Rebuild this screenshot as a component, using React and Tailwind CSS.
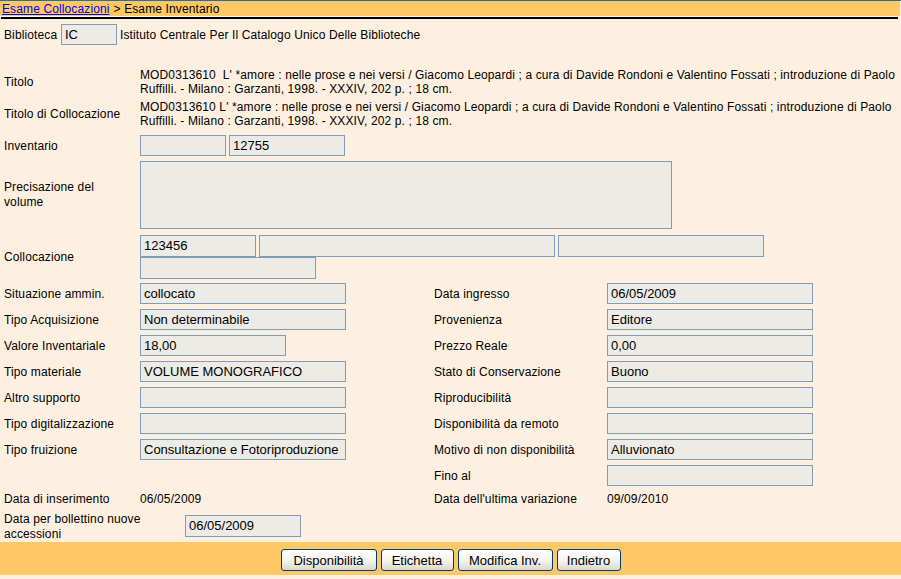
import React from 'react';

// --- Campi della scheda inventario (colonna sinistra / destra) ---
const rows = [
  { left: { label: 'Situazione ammin.', value: 'collocato' }, right: { label: 'Data ingresso', value: '06/05/2009' } },
  { left: { label: 'Tipo Acquisizione', value: 'Non determinabile' }, right: { label: 'Provenienza', value: 'Editore' } },
  { left: { label: 'Valore Inventariale', value: '18,00', short: true }, right: { label: 'Prezzo Reale', value: '0,00' } },
  { left: { label: 'Tipo materiale', value: 'VOLUME MONOGRAFICO' }, right: { label: 'Stato di Conservazione', value: 'Buono' } },
  { left: { label: 'Altro supporto', value: '' }, right: { label: 'Riproducibilità', value: '' } },
  { left: { label: 'Tipo digitalizzazione', value: '' }, right: { label: 'Disponibilità da remoto', value: '' } },
  { left: { label: 'Tipo fruizione', value: 'Consultazione e Fotoriproduzione' }, right: { label: 'Motivo di non disponibilità', value: 'Alluvionato' } },
  { left: null, right: { label: 'Fino al', value: '' } },
];

const buttons = [
  { name: 'Disponibilità', w: 'w-[96px]' },
  { name: 'Etichetta', w: 'w-[73px]' },
  { name: 'Modifica Inv.', w: 'w-[95px]' },
  { name: 'Indietro', w: 'w-[64px]' },
];

// campo "readonly" stile form classico
const Field = ({ value = '', className = '' }) => (
  <div className={`h-[21px] bg-[#ecebe5] border border-[#7f9db9] pl-[3px] flex items-center text-[13px] tracking-normal whitespace-nowrap overflow-hidden ${className}`}>
    {value}
  </div>
);

const App = () => {
  return (
    <div className="w-[901px] h-[579px] bg-[#fdf0e1] text-black text-[12px] tracking-[0.12px] overflow-hidden font-['Liberation_Sans',Arial,sans-serif]">
      {/* Barra di navigazione */}
      <div className="h-[1px] bg-[#2d6ca8]" />
      <div className="h-[15px] bg-[#fec865] flex items-center pl-[2px] mr-[1px] leading-none">
        <a href="#" className="text-[#0000ee] underline">Esame Collocazioni</a>
        <span className="ml-[4px]">&gt; Esame Inventario</span>
      </div>
      <div className="h-[1px] bg-[#fff7ea]" />
      <div className="h-[2px] bg-black ml-[1px] mr-[3px]" />

      <div className="pl-[4px]">
        {/* Biblioteca */}
        <div className="mt-[5px] flex items-center h-[21px]">
          <span className="w-[57px]">Biblioteca</span>
          <Field value="IC" className="w-[56px]" />
          <span className="ml-[3px]">Istituto Centrale Per Il Catalogo Unico Delle Biblioteche</span>
        </div>

        {/* Titoli */}
        <div className="mt-[23px] grid grid-cols-[136px_1fr] items-center">
          <span>Titolo</span>
          <div className="leading-[14px] whitespace-nowrap">
            MOD0313610&nbsp; L' *amore : nelle prose e nei versi / Giacomo Leopardi ; a cura di Davide Rondoni e Valentino Fossati ; introduzione di Paolo<br />
            Ruffilli. - Milano : Garzanti, 1998. - XXXIV, 202 p. ; 18 cm.
          </div>
        </div>
        <div className="mt-[4px] grid grid-cols-[136px_1fr] items-center">
          <span>Titolo di Collocazione</span>
          <div className="leading-[14px] whitespace-nowrap">
            MOD0313610 L' *amore : nelle prose e nei versi / Giacomo Leopardi ; a cura di Davide Rondoni e Valentino Fossati ; introduzione di Paolo<br />
            Ruffilli. - Milano : Garzanti, 1998. - XXXIV, 202 p. ; 18 cm.
          </div>
        </div>

        {/* Inventario */}
        <div className="mt-[7px] grid grid-cols-[136px_1fr] items-center">
          <span>Inventario</span>
          <div className="flex gap-[3px]">
            <Field className="w-[86px]" />
            <Field value="12755" className="w-[116px]" />
          </div>
        </div>

        {/* Precisazione del volume */}
        <div className="mt-[5px] grid grid-cols-[136px_1fr] items-center">
          <span className="leading-[15px]">Precisazione del<br />volume</span>
          <div className="w-[532px] h-[68px] bg-[#ecebe5] border border-[#7f9db9]" />
        </div>

        {/* Collocazione */}
        <div className="mt-[6px] grid grid-cols-[136px_1fr] items-center">
          <span>Collocazione</span>
          <div>
            <div className="flex gap-[3px]">
              <Field value="123456" className="w-[116px] !h-[22px]" />
              <Field className="w-[296px] !h-[22px]" />
              <Field className="w-[206px] !h-[22px]" />
            </div>
            <Field className="w-[176px] !h-[22px]" />
          </div>
        </div>

        {/* Dati amministrativi, due colonne */}
        <div className="mt-[4px] flex flex-col gap-[5px]">
          {rows.map((row, i) => (
            <div key={i} className="grid grid-cols-[136px_294px_173px_206px] items-center h-[21px]">
              {row.left ? (
                <>
                  <span>{row.left.label}</span>
                  <Field value={row.left.value} className={row.left.short ? 'w-[146px]' : 'w-[206px]'} />
                </>
              ) : (
                <>
                  <span />
                  <span />
                </>
              )}
              <span>{row.right.label}</span>
              <Field value={row.right.value} className="w-[206px]" />
            </div>
          ))}
        </div>

        <div className="mt-[4px] h-[16px] grid grid-cols-[136px_294px_173px_206px] items-center">
          <span>Data di inserimento</span>
          <span>06/05/2009</span>
          <span>Data dell'ultima variazione</span>
          <span>09/09/2010</span>
        </div>

        <div className="mt-[6px] h-[27px] flex items-center">
          <span className="w-[181px] leading-[15px] pt-[2px]">Data per bollettino nuove<br />accessioni</span>
          <Field value="06/05/2009" className="w-[116px] !h-[22px]" />
        </div>
      </div>

      {/* Pulsantiera */}
      <div className="mt-[3px] h-[33px] bg-[#fec865] flex justify-center items-start pt-[7px] gap-[4px]">
        {buttons.map((b) => (
          <button
            key={b.name}
            className={`${b.w} h-[22px] text-[13px] leading-none tracking-normal rounded-[3px] border border-[#003c74] bg-gradient-to-b from-white via-[#f5f4ef] to-[#dcd9cd] text-black`}
          >
            {b.name}
          </button>
        ))}
      </div>
    </div>
  );
};

export default App;
